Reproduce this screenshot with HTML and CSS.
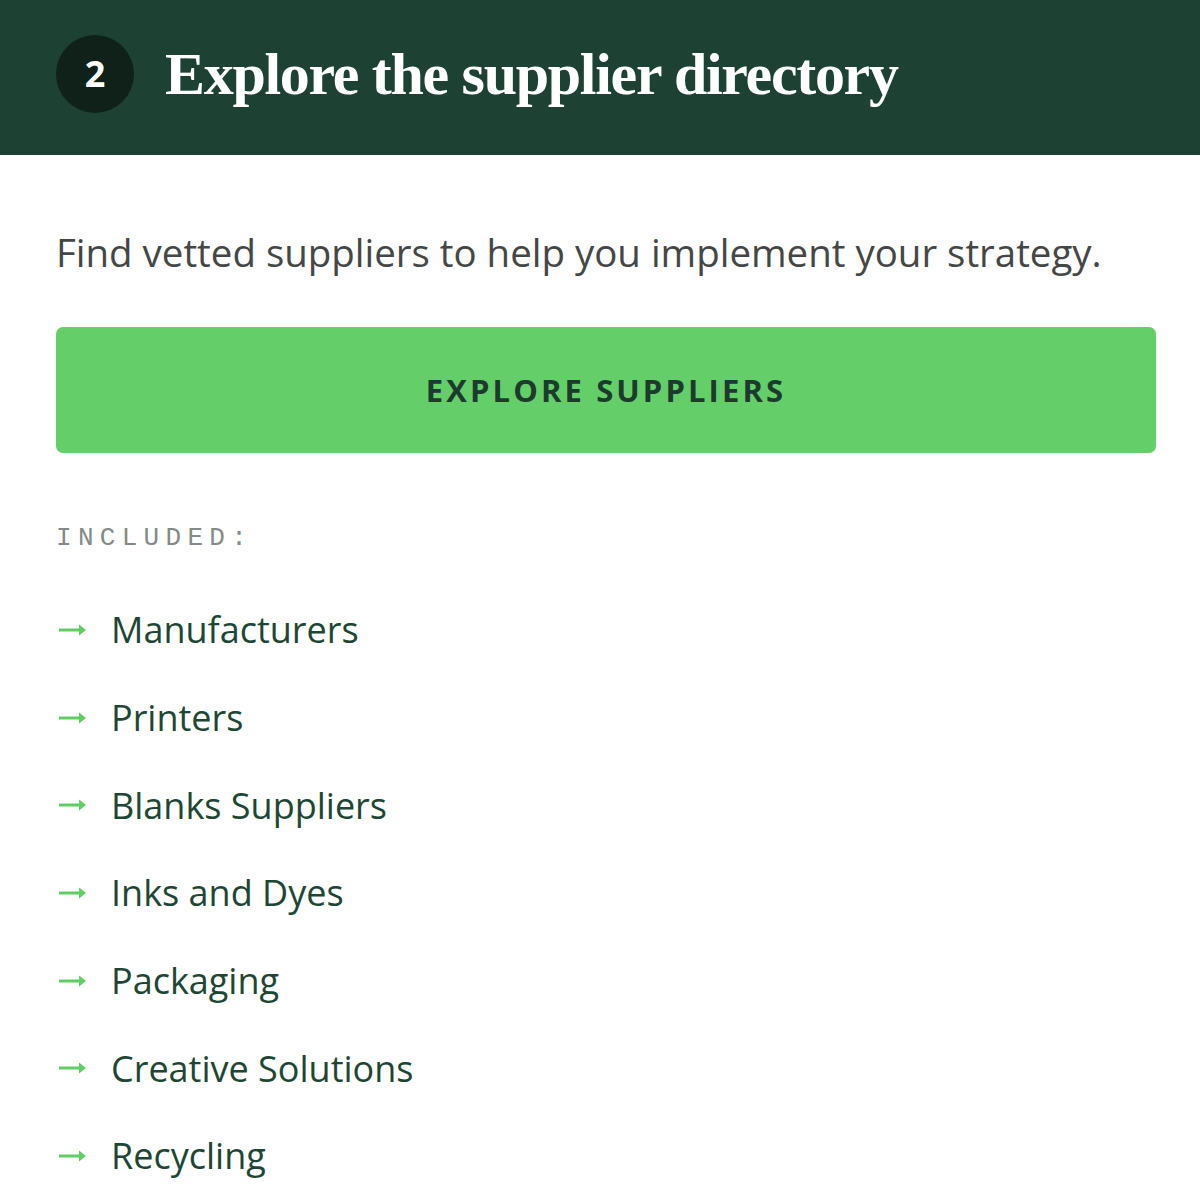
FILE: index.html
```html
<!DOCTYPE html>
<html>
<head>
<meta charset="utf-8">
<link rel="stylesheet" href="styles.css">
</head>
<body>
<header class="header">
  <div class="step">2</div>
  <h1 class="title">Explore the supplier directory</h1>
</header>
<main class="content">
  <p class="lead">Find vetted suppliers to help you implement your strategy.</p>
  <a class="button" href="#">EXPLORE SUPPLIERS</a>
  <div class="label">INCLUDED:</div>
  <ul class="list">
    <li><span class="arrow"><svg width="28" height="14" viewBox="0 0 28 14"><path d="M1 7H22" stroke="#5fcc64" stroke-width="3"/><path d="M21 1.5L28 7L21 12.5Z" fill="#5fcc64"/></svg></span>Manufacturers</li>
    <li><span class="arrow"><svg width="28" height="14" viewBox="0 0 28 14"><path d="M1 7H22" stroke="#5fcc64" stroke-width="3"/><path d="M21 1.5L28 7L21 12.5Z" fill="#5fcc64"/></svg></span>Printers</li>
    <li><span class="arrow"><svg width="28" height="14" viewBox="0 0 28 14"><path d="M1 7H22" stroke="#5fcc64" stroke-width="3"/><path d="M21 1.5L28 7L21 12.5Z" fill="#5fcc64"/></svg></span>Blanks Suppliers</li>
    <li><span class="arrow"><svg width="28" height="14" viewBox="0 0 28 14"><path d="M1 7H22" stroke="#5fcc64" stroke-width="3"/><path d="M21 1.5L28 7L21 12.5Z" fill="#5fcc64"/></svg></span>Inks and Dyes</li>
    <li><span class="arrow"><svg width="28" height="14" viewBox="0 0 28 14"><path d="M1 7H22" stroke="#5fcc64" stroke-width="3"/><path d="M21 1.5L28 7L21 12.5Z" fill="#5fcc64"/></svg></span>Packaging</li>
    <li><span class="arrow"><svg width="28" height="14" viewBox="0 0 28 14"><path d="M1 7H22" stroke="#5fcc64" stroke-width="3"/><path d="M21 1.5L28 7L21 12.5Z" fill="#5fcc64"/></svg></span>Creative Solutions</li>
    <li><span class="arrow"><svg width="28" height="14" viewBox="0 0 28 14"><path d="M1 7H22" stroke="#5fcc64" stroke-width="3"/><path d="M21 1.5L28 7L21 12.5Z" fill="#5fcc64"/></svg></span>Recycling</li>
  </ul>
</main>
</body>
</html>
```
FILE: styles.css
```css
* { box-sizing: border-box; }
html, body { margin: 0; padding: 0; background: #fff; }
body { font-family: "Open Sans", sans-serif; width: 1200px; overflow: hidden; }

.header {
  background: #1d4234;
  height: 155px;
  display: flex;
  align-items: center;
  padding-left: 56px;
  gap: 31px;
}
.step {
  width: 78px;
  height: 78px;
  border-radius: 50%;
  background: #0f2119;
  color: #fff;
  font-family: "Open Sans", sans-serif;
  font-weight: 700;
  font-size: 36px;
  display: flex;
  align-items: center;
  justify-content: center;
  margin-top: -8px;
}
.title {
  margin: 0;
  color: #fff;
  font-family: "Liberation Serif", serif;
  font-weight: 700;
  font-size: 60px;
  letter-spacing: -1.3px;
  margin-top: -6px;
}

.content { padding: 0 44px 0 56px; }
.lead {
  margin: 72px 0 0;
  font-size: 38.45px;
  line-height: 50px;
  color: #444746;
}
.button {
  display: flex;
  align-items: center;
  justify-content: center;
  margin-top: 50px;
  height: 126px;
  background: #64cf69;
  border-radius: 7px;
  color: #1c3a2d;
  font-weight: 700;
  font-size: 31px;
  letter-spacing: 3.1px;
  text-decoration: none;
}
.label {
  margin-top: 70px;
  font-family: "Liberation Mono", monospace;
  font-size: 26px;
  letter-spacing: 6.3px;
  color: #838a87;
  line-height: 30px;
}
.list {
  list-style: none;
  margin: 33px 0 0;
  padding: 0;
}
.list li {
  display: flex;
  align-items: center;
  height: 87.7px;
  font-size: 36px;
  color: #1e4634;
}
.arrow {
  display: flex;
  width: 55px;
  padding-left: 2px;
}
```
